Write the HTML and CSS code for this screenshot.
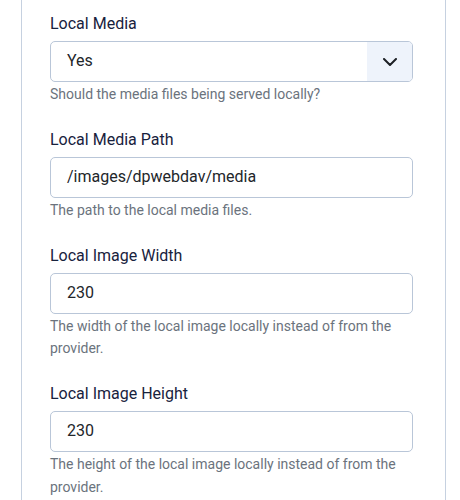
FILE: index.html
```html
<!DOCTYPE html>
<html lang="en">
<head>
<meta charset="utf-8">
<title>Local Media settings</title>
<link rel="stylesheet" href="styles.css">
</head>
<body>
<div class="card">
  <div class="field">
    <label class="label">Local Media</label>
    <div class="control select">
      <span class="value">Yes</span>
      <span class="arrow">
        <svg width="14" height="8" viewBox="0 0 14 8"><path d="M1 1 L7 7 L13 1" fill="none" stroke="#1d2025" stroke-width="2" stroke-linecap="round" stroke-linejoin="round"/></svg>
      </span>
    </div>
    <div class="help">Should the media files being served locally?</div>
  </div>
  <div class="field">
    <label class="label">Local Media Path</label>
    <div class="control"><span class="value">/images/dpwebdav/media</span></div>
    <div class="help">The path to the local media files.</div>
  </div>
  <div class="field">
    <label class="label">Local Image Width</label>
    <div class="control"><span class="value">230</span></div>
    <div class="help">The width of the local image locally instead of from the provider.</div>
  </div>
  <div class="field">
    <label class="label">Local Image Height</label>
    <div class="control"><span class="value">230</span></div>
    <div class="help">The height of the local image locally instead of from the provider.</div>
  </div>
</div>
</body>
</html>
```
FILE: styles.css
```css
html, body {
  margin: 0;
  padding: 0;
  background: #ffffff;
}
body {
  font-family: Roboto, "Liberation Sans", Arial, sans-serif;
  width: 460px;
  height: 500px;
  overflow: hidden;
}
.card {
  margin-left: 21px;
  width: 363px;
  min-height: 488px;
  padding: 12px 32px 0 28px;
  border-left: 1px solid #c6d1e0;
  border-right: 1px solid #c6d1e0;
  display: flex;
  flex-direction: column;
  gap: 22.6px;
}
.field {
  display: flex;
  flex-direction: column;
}
.label {
  font-size: 16px;
  line-height: 24px;
  color: #18223d;
  margin-bottom: 5px;
}
.control {
  height: 41px;
  box-sizing: border-box;
  border: 1px solid #b9c6d8;
  border-radius: 5px;
  display: flex;
  align-items: center;
  padding-left: 16px;
  background: #ffffff;
  overflow: hidden;
}
.value {
  font-size: 16px;
  color: #22262a;
  flex: 1;
  line-height: 24px;
  padding-bottom: 1px;
}
.select {
  padding-right: 0;
}
.arrow {
  width: 45px;
  height: 100%;
  background: #eef3fb;
  display: flex;
  align-items: center;
  justify-content: center;
}
.help {
  margin-top: 1px;
  font-size: 14px;
  line-height: 22.4px;
  color: #6b737d;
}
```
